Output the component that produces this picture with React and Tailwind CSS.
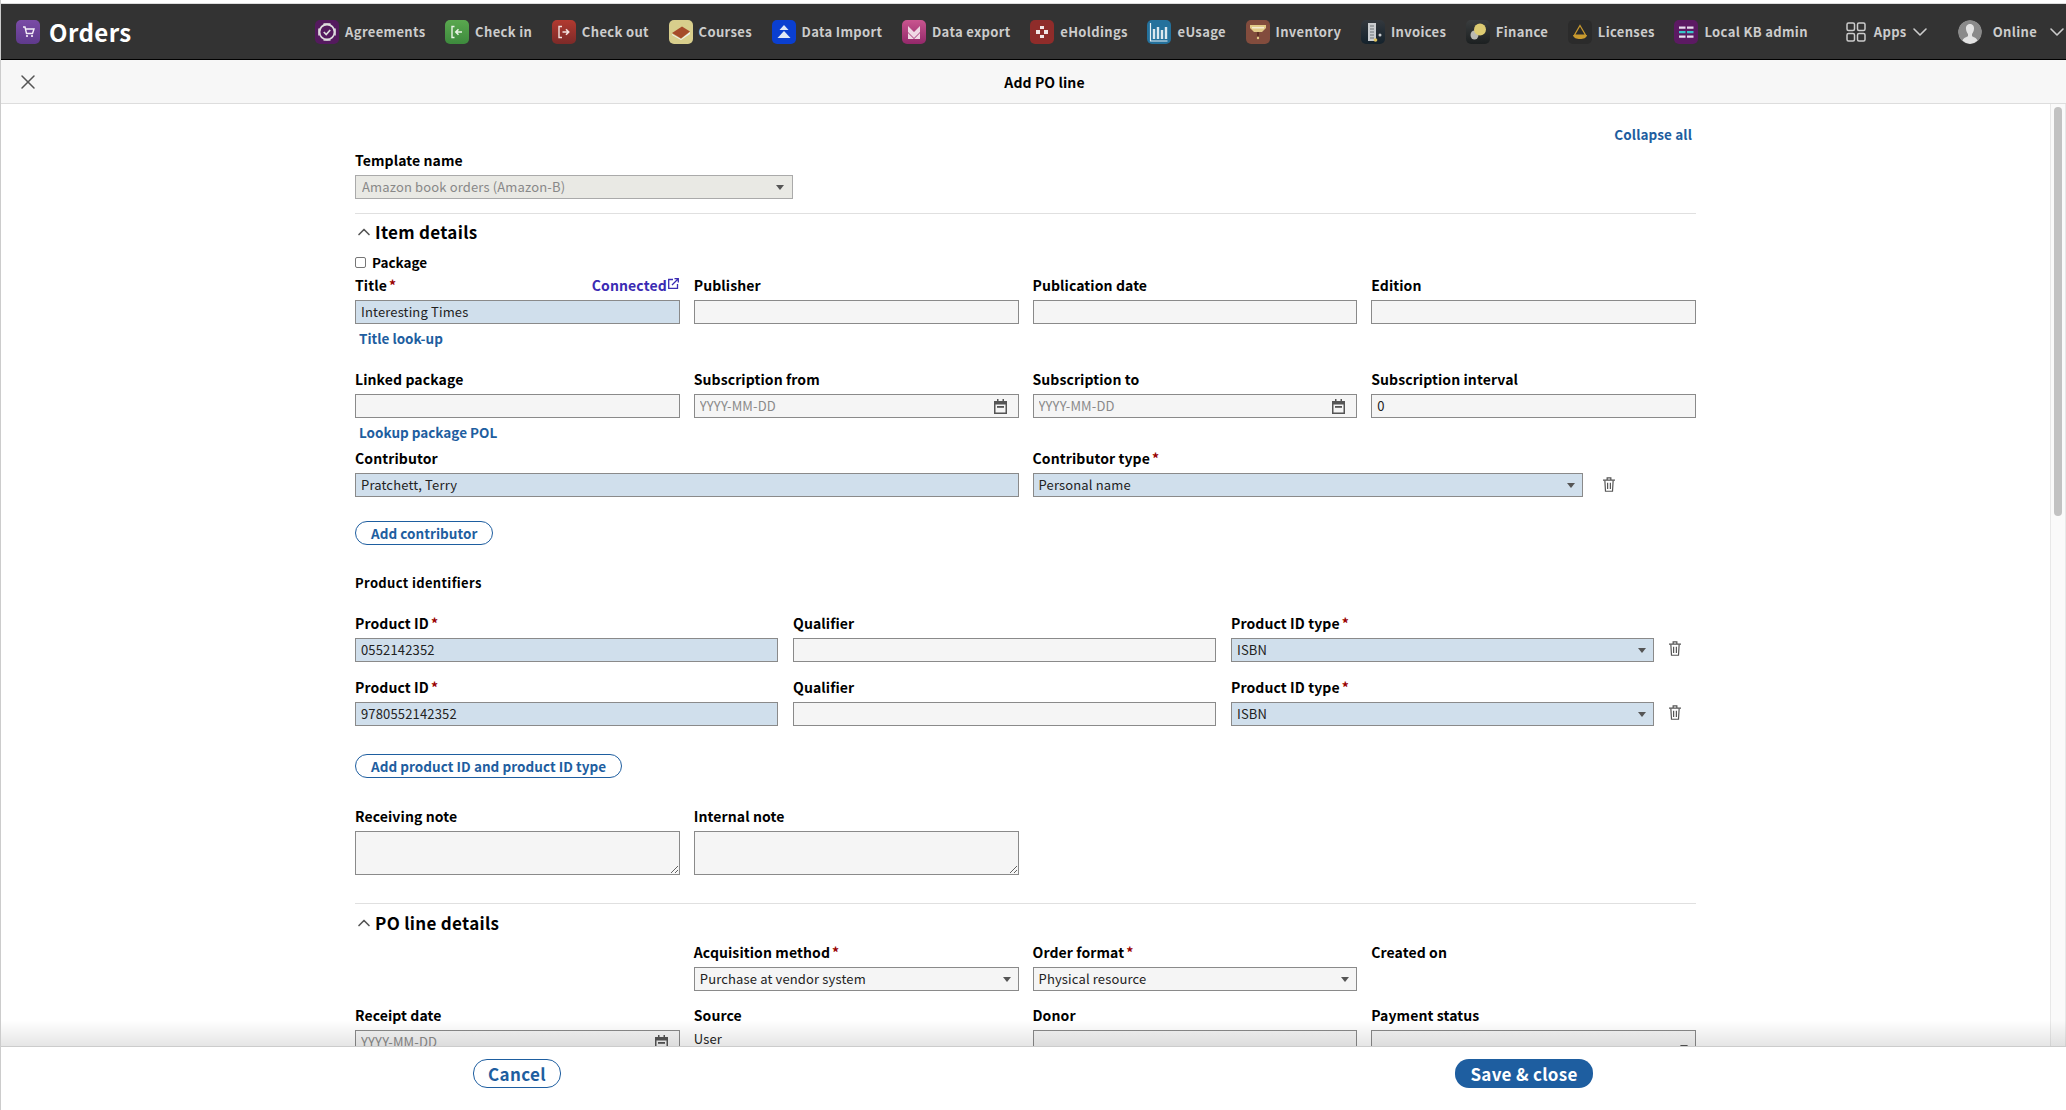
import { ChevronDown, ChevronUp, X } from "lucide-react";

const FONT = "font-['Noto_Sans_CJK_SC','Noto_Sans',sans-serif]";

const Tile = ({ className = "", children }) => (
  <span className={`flex h-6 w-6 shrink-0 items-center justify-center rounded-[5px] ${className}`}>
    <svg viewBox="0 0 24 24" className="h-6 w-6">{children}</svg>
  </span>
);

const apps = [
  {
    name: "Agreements",
    bg: "bg-[#541a5e]",
    icon: (
      <>
        <circle cx="12" cy="12" r="7.5" fill="none" stroke="#ddd" strokeWidth="1.8" />
        <path d="M8.500 3.800h7M8.500 20.200h7M3.800 8.500v7M20.200 8.500v7" stroke="#ddd" strokeWidth="1.2" />
        <path d="M8.800 12l2.400 2.600 4-4.600" fill="none" stroke="#ddd" strokeWidth="1.7" />
      </>
    ),
  },
  {
    name: "Check in",
    bg: "bg-gradient-to-b from-[#5aa84f] to-[#3d8a3d]",
    icon: (
      <>
        <path d="M9.500 6.500H7v11h2.500" fill="none" stroke="#e8f2e4" strokeWidth="1.4" />
        <path d="M17 12h-6M13.500 9.300L10.800 12l2.700 2.700" fill="none" stroke="#e8f2e4" strokeWidth="1.6" />
      </>
    ),
  },
  {
    name: "Check out",
    bg: "bg-gradient-to-b from-[#b23a30] to-[#7c2a28]",
    icon: (
      <>
        <path d="M10 6.500H7v11h3" fill="none" stroke="#f3e2df" strokeWidth="1.4" />
        <path d="M10.500 12h6M14 9.300l2.700 2.700-2.700 2.700" fill="none" stroke="#f3e2df" strokeWidth="1.6" />
      </>
    ),
  },
  {
    name: "Courses",
    bg: "bg-[#d8ce8c]",
    icon: (
      <>
        <path d="M3 14l9 5 9-7v2l-9 6-9-5z" fill="#eee" />
        <path d="M3 13l10-6.500 8 5-9 7z" fill="#a64b2a" />
      </>
    ),
  },
  {
    name: "Data Import",
    bg: "bg-[#0a3fd0]",
    icon: (
      <>
        <path d="M12 5l4.500 5h-9z" fill="#dfe8f6" />
        <path d="M12 11l6.500 7h-13z" fill="#dfe8f6" />
      </>
    ),
  },
  {
    name: "Data export",
    bg: "bg-gradient-to-b from-[#c9558f] to-[#93286a]",
    icon: (
      <>
        <path d="M6 6l6 6 6-6v6l-6 6-6-6z" fill="#efd9e4" />
        <path d="M6 13l6 6 6-6v6H6z" fill="#efd9e4" />
      </>
    ),
  },
  {
    name: "eHoldings",
    bg: "bg-[#8f2c2a]",
    icon: (
      <path
        d="M10 6h4v3h-4zM6 10h4v4H6zM14 10h4v4h-4zM10 15h4v3h-4z"
        fill="#f2e6e5"
      />
    ),
  },
  {
    name: "eUsage",
    bg: "bg-[#24719c]",
    icon: (
      <>
        <path d="M3.500 3v18h17" stroke="#e6f0f5" strokeWidth="1.2" fill="none" />
        <path d="M7 19V9M11 19V7M15 19v-9M19 19V7" stroke="#dbe8ef" strokeWidth="2.400" fill="none" />
      </>
    ),
  },
  {
    name: "Inventory",
    bg: "bg-[#824c3d]",
    icon: (
      <>
        <path d="M4 5h16v3l-4 4H8L4 8z" fill="#e1c987" />
        <path d="M6 7h12v1.500H6z" fill="#f4ead1" />
        <path d="M11 12h2v4h-2z" fill="#5f3025" />
        <circle cx="12" cy="18" r="1.200" fill="#e1c987" />
      </>
    ),
  },
  {
    name: "Invoices",
    bg: "bg-gradient-to-b from-[#33383d] to-[#14222c]",
    icon: (
      <>
        <path d="M7 3h8v18H7z" fill="#c9cdd0" />
        <path d="M9 6h4M9 9h4M9 12h4M9 15h4M9 18h4" stroke="#6d7478" />
        <circle cx="19" cy="15" r="1.500" fill="#c9cdd0" />
        <circle cx="14.500" cy="20" r="1.800" fill="#e1c45f" />
      </>
    ),
  },
  {
    name: "Finance",
    bg: "bg-gradient-to-b from-[#3a3d3e] to-[#1c2021]",
    icon: (
      <>
        <ellipse cx="8.500" cy="15" rx="4" ry="4.500" fill="#b9b9b2" />
        <circle cx="14" cy="9.500" r="6" fill="#dccb72" />
      </>
    ),
  },
  {
    name: "Licenses",
    bg: "bg-[#2b2b2b]",
    icon: (
      <>
        <path d="M12 5.500L17.500 15H6.500z" fill="none" stroke="#c99a2e" strokeWidth="1.200" />
        <path d="M5 15h14c-.5 3-3.500 4-7 4s-6.500-1-7-4z" fill="#c99a2e" />
      </>
    ),
  },
  {
    name: "Local KB admin",
    bg: "bg-[#5c1a63]",
    icon: (
      <>
        <path d="M5 6.500h6.500v2.200H5zM13 6.500h6.500v2.200H13zM5 15.500h6.500v2.200H5zM13 15.500h6.500v2.200H13z" fill="#e8dff0" />
        <path d="M5 11h6.500v2.200H5zM13 11h6.500v2.200H13z" fill="#37c4c9" />
      </>
    ),
  },
];

const Label = ({ children, required }) => (
  <div className="mb-[5px] flex h-5 items-center text-sm leading-5 font-semibold tracking-[0.1px] text-black">
    {children}
    {required && <span className="ml-[2px] text-[#900]">*</span>}
  </div>
);

const Box = ({ value, placeholder, filled, disabled, children, className = "" }) => (
  <div
    className={`flex h-6 items-center border px-[5px] text-[13px] tracking-[0.15px] ${
      filled
        ? "border-[#8a8a8a] bg-[#d0dfec] text-[#222]"
        : disabled
          ? "border-[#aaa] bg-[#e9e9e4] text-[#888]"
          : "border-[#8a8a8a] bg-[#f5f5f5] text-[#222]"
    } ${className}`}
  >
    <span className={`flex-1 truncate ${placeholder ? "text-[#8a8a8a]" : ""}`}>{value || placeholder}</span>
    {children}
  </div>
);

const Caret = ({ className = "mr-[2px]" }) => (
  <span className={`h-0 w-0 border-x-[4.5px] border-t-[5px] border-x-transparent border-t-[#555] ${className}`} />
);

const CalendarIcon = () => (
  <svg viewBox="0 0 13 15" className="mr-[6px] h-[15px] w-[13px]" fill="#555">
    <path d="M3 0h1.500v2h4V0H10v2h3v13H0V2h3zM1.500 5.500v8h10v-8z" />
    <path d="M3 7h7v1.800H3z" />
  </svg>
);

const DateBox = () => (
  <Box placeholder="YYYY-MM-DD">
    <CalendarIcon />
  </Box>
);

const LinkText = ({ children, className = "" }) => (
  <div className={`text-[13.5px] leading-5 font-semibold text-[#1e5ea0] ${className}`}>{children}</div>
);

const Pill = ({ children }) => (
  <div className="inline-flex h-6 items-center rounded-full border border-[#1e5ea0] px-[15px] text-[13.5px] font-semibold tracking-[0.05px] text-[#1e5ea0]">
    {children}
  </div>
);

const Section = ({ title }) => (
  <div className="flex h-6 items-center text-[17px] font-semibold tracking-[0.3px] text-black">
    <ChevronUp size={20} strokeWidth={2} className="mr-px -ml-px text-[#555]" />
    {title}
  </div>
);

const Trash = () => (
  <svg viewBox="0 0 13 16" className="h-[15px] w-[12px]" fill="none" stroke="#555" strokeWidth="1.300">
    <path d="M0 3.200h13M4.500 3V.8h4V3" />
    <path d="M2 3.500l.7 11.800h7.600L11 3.500" />
    <path d="M5 6v7M8 6v7" />
  </svg>
);

const ProductRow = ({ id, className = "" }) => (
  <div className={`flex ${className}`}>
    <div className="flex w-[1299px] gap-[15px]">
      <div className="w-[423px]">
        <Label required>Product ID</Label>
        <Box value={id} filled />
      </div>
      <div className="w-[423px]">
        <Label>Qualifier</Label>
        <Box />
      </div>
      <div className="w-[423px]">
        <Label required>Product ID type</Label>
        <Box value="ISBN" filled>
          <Caret />
        </Box>
      </div>
    </div>
    <div className="flex flex-1 items-end justify-center pb-[6px]">
      <Trash />
    </div>
  </div>
);

export default function App() {
  return (
    <div className={`${FONT} flex h-[1110px] w-[2066px] flex-col overflow-hidden border-l border-[#ccc] bg-white`}>
      <div className="h-[4px] shrink-0 border-b border-[#ddd] bg-white" />
      <header className="flex h-[56px] shrink-0 items-center border-b border-black bg-[#333] pl-[15px]">
        <Tile className="bg-gradient-to-b from-[#7a4ba6] to-[#5f3a8c]">
          <path d="M7 7h2l1.500 6.500h6L18 9h-8" fill="none" stroke="#f4eef8" strokeWidth="1.400" />
          <circle cx="11" cy="16" r="1.100" fill="#f4eef8" />
          <circle cx="16" cy="16" r="1.100" fill="#f4eef8" />
        </Tile>
        <span className="ml-[9px] text-2xl font-bold tracking-[0.4px] text-white">Orders</span>
        <nav className="ml-[183.5px] flex items-center gap-[19.6px]">
          {apps.map((app) => (
            <div
              key={app.name}
              className="flex items-center gap-[6px] text-[13px] font-semibold tracking-[0.35px] whitespace-nowrap text-[#ccc]"
            >
              <Tile className={app.bg}>{app.icon}</Tile>
              {app.name}
            </div>
          ))}
        </nav>
        <div className="ml-[38px] flex items-center text-[13px] font-semibold tracking-[0.35px] text-[#ccc]">
          <svg viewBox="0 0 20 20" className="mr-2 h-5 w-5" fill="none" stroke="#ccc" strokeWidth="1.500">
            <rect x="1" y="1" width="7.500" height="7.500" rx="1.500" />
            <rect x="11.500" y="1" width="7.500" height="7.500" rx="1.500" />
            <rect x="1" y="11.500" width="7.500" height="7.500" rx="1.500" />
            <rect x="11.500" y="11.500" width="7.500" height="7.500" rx="1.500" />
          </svg>
          Apps
          <ChevronDown size={24} strokeWidth={1.6} className="ml-px" />
        </div>
        <div className="ml-[16px] h-6 w-px bg-[#555]" />
        <svg viewBox="0 0 24 24" className="ml-[10px] h-6 w-6 shrink-0 rounded-full">
          <circle cx="12" cy="12" r="12" fill="#8a8a8a" />
          <path
            d="M12 4c3 0 4.200 2.400 4 5-.2 2.400-1.300 4-2 5v2c1 1.200 4.500 1.600 5.500 4.500A12 12 0 0 1 12 24a12 12 0 0 1-7.500-3.500C5.500 17.600 9 17.200 10 16v-2c-.7-1-1.800-2.600-2-5-.2-2.600 1-5 4-5z"
            fill="#e3e3e3"
          />
        </svg>
        <span className="ml-[11px] text-[13px] font-semibold tracking-[0.35px] text-[#ccc]">Online</span>
        <ChevronDown size={24} strokeWidth={1.6} className="ml-[8px] shrink-0 text-[#ccc]" />
      </header>

      <div className="relative flex h-[44px] shrink-0 items-center justify-center border-b border-[#ddd] bg-[#f7f7f7] pl-[22px] text-sm font-semibold tracking-[0.1px] text-black">
        <X size={24} strokeWidth={1.5} className="absolute left-[15px] text-[#555]" />
        Add PO line
      </div>

      <div className="relative min-h-0 flex-1 overflow-hidden">
        <main className="mr-[16px] px-[354px] pt-[20px]">
          <div className="-mb-[2px] flex justify-end pr-[4px]">
            <LinkText className="tracking-[0.1px]">Collapse all</LinkText>
          </div>
          <div className="mt-[8px] w-[438px]">
            <Label>Template name</Label>
            <Box value="Amazon book orders (Amazon-B)" disabled className="pl-[6px]">
              <Caret className="mr-[3.5px]" />
            </Box>
          </div>
          <div className="mt-[14px] border-t border-[#e0e0e0]" />

          <div className="mt-[6px]">
            <Section title="Item details" />
          </div>
          <div className="mt-[8px] flex h-5 items-center text-[13.5px] font-semibold">
            <span className="mr-[6px] h-[11px] w-[11px] rounded-[2px] border border-[#767676] bg-white" />
            Package
          </div>
          <div className="mt-[3px] grid grid-cols-4 gap-x-[14px]">
            <div>
              <div className="relative">
                <Label required>Title</Label>
                <div className="absolute top-0 right-px flex h-5 items-center text-sm font-semibold tracking-[0.1px] text-[#3b2bb3]">
                  Connected
                  <svg viewBox="0 0 11 11" className="ml-[1px] h-[11px] w-[11px] -translate-y-[2px]" fill="none" stroke="#3b2bb3" strokeWidth="1.300">
                    <path d="M5 1.500H.7v8.800h8.800V6" />
                    <path d="M4 7l6-6M6.500.7h3.800v3.800" />
                  </svg>
                </div>
              </div>
              <Box value="Interesting Times" filled />
              <LinkText className="mt-[4px] pb-px pl-[4px]">Title look-up</LinkText>
            </div>
            <div>
              <Label>Publisher</Label>
              <Box />
            </div>
            <div>
              <Label>Publication date</Label>
              <Box />
            </div>
            <div>
              <Label>Edition</Label>
              <Box />
            </div>
          </div>

          <div className="mt-[20px] grid grid-cols-4 gap-x-[14px]">
            <div>
              <Label>Linked package</Label>
              <Box />
              <LinkText className="mt-[4px] pb-px pl-[4px]">Lookup package POL</LinkText>
            </div>
            <div>
              <Label>Subscription from</Label>
              <DateBox />
            </div>
            <div>
              <Label>Subscription to</Label>
              <DateBox />
            </div>
            <div>
              <Label>Subscription interval</Label>
              <Box value="0" />
            </div>
          </div>

          <div className="mt-[5px] grid grid-cols-4 gap-x-[14px]">
            <div className="col-span-2">
              <Label>Contributor</Label>
              <Box value="Pratchett, Terry" filled />
            </div>
            <div className="col-span-2 flex">
              <div className="w-[550px]">
                <Label required>Contributor type</Label>
                <Box value="Personal name" filled>
                  <Caret />
                </Box>
              </div>
              <div className="flex w-[52px] items-end justify-center pb-[5px]">
                <Trash />
              </div>
            </div>
          </div>

          <div className="mt-[24px] flex">
            <Pill>Add contributor</Pill>
          </div>

          <div className="mt-[28px] h-5 text-[13px] leading-5 font-semibold tracking-[0.35px]">Product identifiers</div>

          <ProductRow id="0552142352" className="mt-[20px]" />
          <ProductRow id="9780552142352" className="mt-[15px]" />

          <div className="mt-[28px] flex">
            <Pill>Add product ID and product ID type</Pill>
          </div>

          <div className="mt-[28px] grid grid-cols-4 gap-x-[14px]">
            <div>
              <Label>Receiving note</Label>
              <textarea className="block h-[44px] w-full resize border border-[#8a8a8a] bg-[#f5f5f5]" />
            </div>
            <div>
              <Label>Internal note</Label>
              <textarea className="block h-[44px] w-full resize border border-[#8a8a8a] bg-[#f5f5f5]" />
            </div>
          </div>

          <div className="mt-[28px] border-t border-[#e0e0e0]" />
          <div className="mt-[7px]">
            <Section title="PO line details" />
          </div>

          <div className="mt-[7px] grid grid-cols-4 gap-x-[14px]">
            <div />
            <div>
              <Label required>Acquisition method</Label>
              <Box value="Purchase at vendor system">
                <Caret />
              </Box>
            </div>
            <div>
              <Label required>Order format</Label>
              <Box value="Physical resource">
                <Caret />
              </Box>
            </div>
            <div>
              <Label>Created on</Label>
            </div>
          </div>

          <div className="mt-[14px] grid grid-cols-4 gap-x-[14px]">
            <div>
              <Label>Receipt date</Label>
              <DateBox />
            </div>
            <div>
              <Label>Source</Label>
              <div className="text-[13px] leading-[18px] tracking-[0.15px] text-[#222]">User</div>
            </div>
            <div>
              <Label>Donor</Label>
              <Box />
            </div>
            <div>
              <Label>Payment status</Label>
              <Box>
                <Caret className="mt-[10px] mr-[2px]" />
              </Box>
            </div>
          </div>
        </main>

        <div className="absolute top-0 right-0 bottom-0 w-[16px] border-x border-[#e8e8e8] bg-[#fafafa] pt-[3px] pl-[3px]">
          <div className="h-[409px] w-[8px] rounded-full bg-[#c2c2c2]" />
        </div>
        <div className="absolute right-0 bottom-0 left-0 h-[26px] bg-gradient-to-b from-transparent to-black/10" />
      </div>

      <footer className="flex h-[64px] shrink-0 items-start border-t border-[#ccc] bg-white pt-[12px] pl-[472px]">
        <div className="flex h-[29px] w-[88px] items-center justify-center rounded-[14px] border border-[#1e5ea0] text-[17px] font-semibold tracking-[0.4px] text-[#1e5ea0]">
          Cancel
        </div>
        <div className="ml-[894px] flex h-[29px] w-[138px] items-center justify-center rounded-[14px] bg-[#1e5ea0] text-[17px] font-semibold tracking-[0.3px] text-white">
          Save &amp; close
        </div>
      </footer>
    </div>
  );
}
